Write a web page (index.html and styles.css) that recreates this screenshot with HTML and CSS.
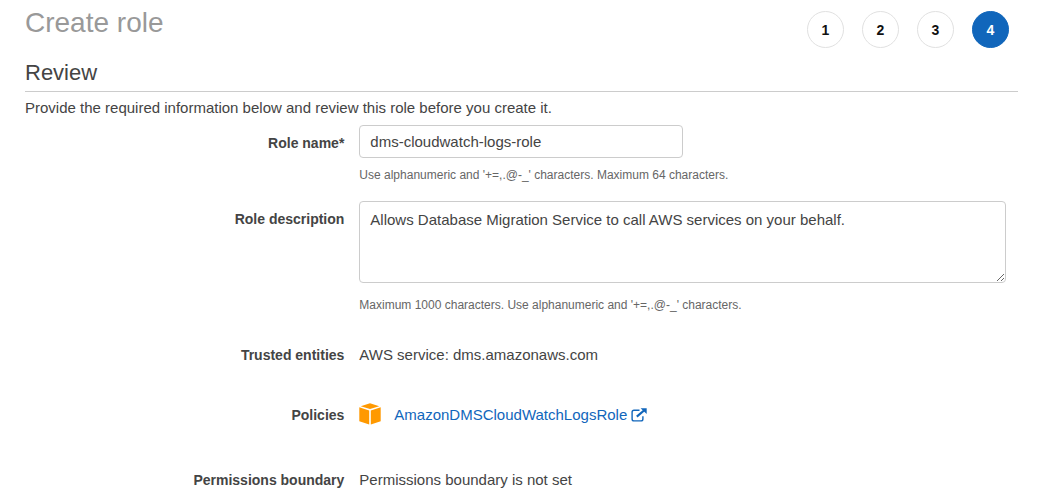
FILE: index.html
```html
<!DOCTYPE html>
<html lang="en">
<head>
<meta charset="utf-8">
<title>Create role</title>
<meta name="viewport" content="width=device-width, initial-scale=1">
<link rel="stylesheet" href="styles.css">
</head>
<body>
<main class="wizard">
  <header class="wizard-header">
    <h1 class="title">Create role</h1>
    <ol class="steps">
      <li class="step">1</li>
      <li class="step">2</li>
      <li class="step">3</li>
      <li class="step step-current" aria-current="step">4</li>
    </ol>
  </header>
  <h2 class="section-title">Review</h2>
  <p class="intro">Provide the required information below and review this role before you create it.</p>
  <form class="review">
    <div class="row row-name">
      <label class="label" for="role-name">Role name*</label>
      <div class="value">
        <input class="control name-input" id="role-name" type="text" value="dms-cloudwatch-logs-role" aria-describedby="name-hint">
        <p class="hint" id="name-hint">Use alphanumeric and '+=,.@-_' characters. Maximum 64 characters.</p>
      </div>
    </div>
    <div class="row row-description">
      <label class="label" for="role-description">Role description</label>
      <div class="value">
        <textarea class="control description-input" id="role-description" aria-describedby="description-hint">Allows Database Migration Service to call AWS services on your behalf.</textarea>
        <p class="hint" id="description-hint">Maximum 1000 characters. Use alphanumeric and '+=,.@-_' characters.</p>
      </div>
    </div>
    <div class="row row-static row-trusted">
      <span class="label">Trusted entities</span>
      <span class="value">AWS service: dms.amazonaws.com</span>
    </div>
    <div class="row row-static row-policies">
      <span class="label">Policies</span>
      <div class="value policy">
        <svg class="policy-icon" viewBox="0 0 22 22" aria-hidden="true">
          <path d="M11 0.3 20.3 3.2 11 6 1.7 3.2z"/>
          <path d="M0.3 4.3 10.2 7.4V21.4L0.3 18.2z"/>
          <path d="M21.7 4.3 11.8 7.4V21.4L21.7 18.2z"/>
        </svg>
        <a class="policy-link" href="#">AmazonDMSCloudWatchLogsRole
          <svg class="external-icon" viewBox="0 0 16 14" aria-hidden="true">
            <path class="external-frame" d="M8.5 2.2H3Q1.1 2.2 1.1 4.1V11Q1.1 12.9 3 12.9H10Q11.9 12.9 11.9 11V8.2"/>
            <path class="external-shaft" d="M5.8 8.6 13 2.5"/>
            <path class="external-head" d="M9.6 0.3H15.7V6z"/>
          </svg>
        </a>
      </div>
    </div>
    <div class="row row-static row-boundary">
      <span class="label">Permissions boundary</span>
      <span class="value">Permissions boundary is not set</span>
    </div>
  </form>
</main>
</body>
</html>
```
FILE: styles.css
```css
* {
  box-sizing: border-box;
}

body {
  margin: 0;
  background: #fff;
  color: #444;
  font: 15px/20px "Liberation Sans", Arial, sans-serif;
}

h1, h2, p, ol {
  margin: 0;
  padding: 0;
}

.wizard {
  padding: 4px 25px 8px;
}

.wizard-header {
  display: flex;
  align-items: flex-start;
  justify-content: space-between;
}

.title {
  color: #999;
  font-size: 28px;
  font-weight: 400;
  line-height: 38px;
}

.steps {
  display: flex;
  gap: 18px;
  padding: 7px 9px 0 0;
  list-style: none;
}

.step {
  display: flex;
  align-items: center;
  justify-content: center;
  width: 37px;
  height: 37px;
  border: 1px solid #e1e1e1;
  border-radius: 50%;
  color: #111;
  font-size: 14px;
  font-weight: 700;
}

.step-current {
  border-color: #1166bb;
  background: #1166bb;
  color: #fff;
}

.section-title {
  margin-top: 10px;
  padding-bottom: 3px;
  border-bottom: 1px solid #ccc;
  font-size: 22px;
  font-weight: 400;
  line-height: 30px;
}

.intro {
  margin-top: 6px;
}

.review {
  margin-top: 7px;
}

.row {
  display: grid;
  grid-template-columns: minmax(0, 32fr) minmax(0, 66fr);
  gap: 15px;
}

.label {
  font-size: 14px;
  font-weight: 700;
  text-align: right;
}

.value {
  padding-right: 12px;
}

.control {
  display: block;
  margin: 0;
  border: 1px solid #ccc;
  border-radius: 4px;
  background: #fff;
  color: #444;
  font: inherit;
}

.name-input {
  width: 50%;
  height: 33px;
  padding: 0 10px;
}

.description-input {
  width: 100%;
  height: 82px;
  padding: 8px 10px;
  resize: vertical;
}

.hint {
  margin-top: 7px;
  color: #666;
  font-size: 12px;
}

.row .label {
  padding-top: 8px;
}

.row-description {
  margin-top: 16px;
}

.row-description .hint {
  margin-top: 12px;
}

.row-static {
  margin-top: 40px;
}

.row-static .label {
  padding-top: 0;
}

.row-trusted {
  margin-top: 30px;
}

.row-boundary {
  margin-top: 45px;
}

.policy {
  display: flex;
  align-items: center;
  gap: 13px;
  height: 20px;
}

.policy-icon {
  width: 22px;
  height: 22px;
  margin-bottom: 3px;
  fill: #f90;
}

.policy-link {
  color: #1166bb;
  text-decoration: none;
}

.external-icon {
  width: 16px;
  height: 14px;
  vertical-align: -2px;
}

.external-frame,
.external-shaft {
  fill: none;
  stroke: #1166bb;
  stroke-width: 1.4;
}

.external-shaft {
  stroke-width: 2.2;
}

.external-head {
  fill: #1166bb;
}
```
